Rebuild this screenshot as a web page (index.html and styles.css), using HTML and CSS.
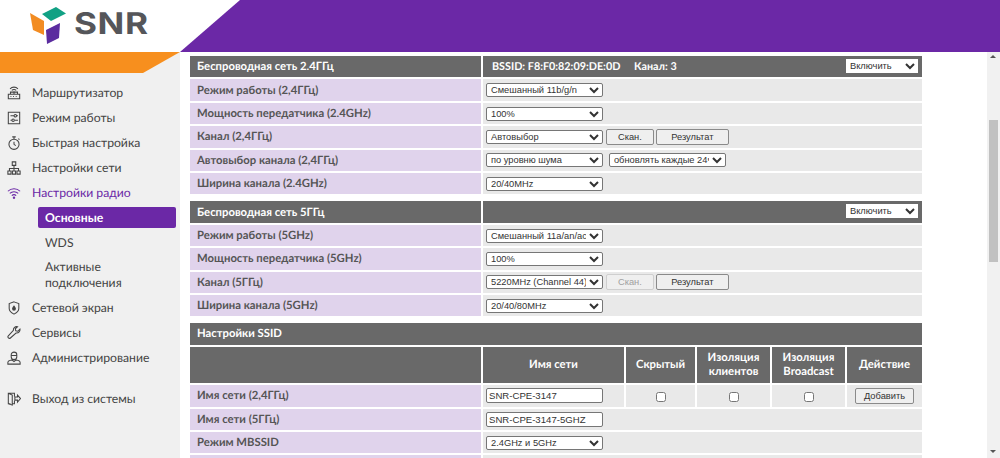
FILE: index.html
```html
<!DOCTYPE html>
<html lang="ru">
<head>
    <meta charset="UTF-8">
    <title>SNR</title>
    <link rel="stylesheet" href="styles.css">
</head>
<body>
    <header class="top">
        <a class="logo">
            <svg class="logo-mark" viewBox="0 0 37 38" width="37" height="38">
                <path d="M12 7 26 0 36 6.500 21 14Z" fill="#12a184"/>
                <path d="M0 6 14 14V28L3 23Z" fill="#f28c22"/>
                <path d="M30 16 29 31 17 37 16 23Z" fill="#5b2c9f"/>
            </svg>
            <span class="logo-text">SNR</span>
        </a>
        <div class="top-fill"></div>
    </header>

    <div class="page">
        <nav class="side">
            <div class="side-bar"></div>
            <ul class="menu">
                <li class="menu-item">
                    <svg class="ico" viewBox="0 0 16 16"><path d="M1.500 9.500h13v5h-13zM4 12h1M7 12h1M10 12h1M8 9.500V6M5.500 5a3.500 3.500 0 0 1 5 0M3.500 3.200a6.300 6.300 0 0 1 9 0M4 9.500V7h8v2.500"/></svg>
                    Маршрутизатор
                </li>
                <li class="menu-item">
                    <svg class="ico" viewBox="0 0 16 16"><path d="M1.500 1.500h13v13h-13zM4 5.500h4M11 5.500h1.500M4 10.500h1.500M9 10.500h3.500"/><circle cx="9.500" cy="5.500" r="1.400"/><circle cx="7" cy="10.500" r="1.400"/></svg>
                    Режим работы
                </li>
                <li class="menu-item">
                    <svg class="ico" viewBox="0 0 16 16"><circle cx="8" cy="9.500" r="5.800"/><path d="M6 1h4M8 1v2.500M8 6.500v3l2 1.500M13 3l1.200 1.200"/></svg>
                    Быстрая настройка
                </li>
                <li class="menu-item">
                    <svg class="ico" viewBox="0 0 16 16"><path d="M6 1h4v4H6zM1 11.500h3.600v3.500H1zM6.200 11.500h3.600v3.500H6.200zM11.400 11.500H15v3.500h-3.600zM8 5v6.500M2.800 11.500V8.500h10.400v3"/></svg>
                    Настройки сети
                </li>
                <li class="menu-item menu-item-active">
                    <svg class="ico" viewBox="0 0 16 16"><path d="M1 6a10 10 0 0 1 14 0M3.200 8.500a7 7 0 0 1 9.600 0M5.500 11a3.700 3.700 0 0 1 5 0"/><circle cx="8" cy="13.300" r="0.800"/></svg>
                    Настройки радио
                </li>
                <li class="sub-item sub-item-current">Основные</li>
                <li class="sub-item">WDS</li>
                <li class="sub-item sub-item-long">Активные подключения</li>
                <li class="menu-item">
                    <svg class="ico" viewBox="0 0 16 16"><path d="M8 1 13.500 3v5.500c0 3-2.500 5-5.500 6.500-3-1.500-5.500-3.500-5.500-6.500V3z"/><path class="ico-solid" d="M8 4.800c1.300 1.700 2.200 2.800 2.200 4a2.200 2.200 0 0 1-4.400 0c0-1.200.9-2.300 2.200-4z"/></svg>
                    Сетевой экран
                </li>
                <li class="menu-item">
                    <svg class="ico" viewBox="0 0 16 16"><path d="M14.800 3.500 12.300 6 10 5.500 9.500 3.200 12 .9C9.500.200 7 2 7.300 5L1.500 11.300c-1.400 1.500.8 3.800 2.400 2.400L10.300 8c3 .4 5-2 4.500-4.500z"/></svg>
                    Сервисы
                </li>
                <li class="menu-item">
                    <svg class="ico" viewBox="0 0 16 16"><path d="M4.800 4.500a3.200 3.200 0 0 1 6.400 0v2a3.200 3.200 0 0 1-6.400 0zM4.800 5.200h6.400M1 15v-2c0-1.500 2.500-2.500 4.500-2.800L8 12l2.500-1.800c2 .3 4.500 1.300 4.500 2.800v2z"/></svg>
                    Администрирование
                </li>
                <li class="menu-item menu-item-exit">
                    <svg class="ico" viewBox="0 0 16 16"><path d="M8.500 5V1.500H1.500v12H4M1.500 1.500 6 3.500v11.500l-4.500-1.500M8.500 10v3.500H6M9 5.700h3V3.500l3.500 4-3.500 4V9.300H9z"/></svg>
                    Выход из системы
                </li>
            </ul>
        </nav>

        <main class="content">
            <table class="conf">
                <colgroup><col class="col-label"><col></colgroup>
                <tr class="head">
                    <td>Беспроводная сеть 2.4ГГц</td>
                    <td class="head-value">
                        <span class="bssid">BSSID: F8:F0:82:09:DE:0D</span>
                        <span>Канал: 3</span>
                        <select class="sel-switch"><option>Включить</option></select>
                    </td>
                </tr>
                <tr>
                    <td>Режим работы (2,4ГГц)</td>
                    <td><select class="sel"><option>Смешанный 11b/g/n</option></select></td>
                </tr>
                <tr>
                    <td>Мощность передатчика (2.4GHz)</td>
                    <td><select class="sel"><option>100%</option></select></td>
                </tr>
                <tr>
                    <td>Канал (2,4ГГц)</td>
                    <td>
                        <select class="sel"><option>Автовыбор</option></select>
                        <button class="btn btn-scan">Скан.</button>
                        <button class="btn btn-result">Результат</button>
                    </td>
                </tr>
                <tr>
                    <td>Автовыбор канала (2,4ГГц)</td>
                    <td>
                        <select class="sel"><option>по уровню шума</option></select>
                        <select class="sel sel-update"><option>обновлять каждые 24ч</option></select>
                    </td>
                </tr>
                <tr>
                    <td>Ширина канала (2.4GHz)</td>
                    <td><select class="sel"><option>20/40MHz</option></select></td>
                </tr>
            </table>

            <table class="conf">
                <colgroup><col class="col-label"><col></colgroup>
                <tr class="head">
                    <td>Беспроводная сеть 5ГГц</td>
                    <td class="head-value"><select class="sel-switch"><option>Включить</option></select></td>
                </tr>
                <tr>
                    <td>Режим работы (5GHz)</td>
                    <td><select class="sel"><option>Смешанный 11a/an/ac</option></select></td>
                </tr>
                <tr>
                    <td>Мощность передатчика (5GHz)</td>
                    <td><select class="sel"><option>100%</option></select></td>
                </tr>
                <tr>
                    <td>Канал (5ГГц)</td>
                    <td>
                        <select class="sel"><option>5220MHz (Channel 44)</option></select>
                        <button class="btn btn-scan" disabled>Скан.</button>
                        <button class="btn btn-result">Результат</button>
                    </td>
                </tr>
                <tr>
                    <td>Ширина канала (5GHz)</td>
                    <td><select class="sel"><option>20/40/80MHz</option></select></td>
                </tr>
            </table>

            <table class="conf">
                <colgroup><col class="col-label"><col class="col-name"><col class="col-hidden"><col class="col-iso"><col class="col-bc"><col></colgroup>
                <tr class="head">
                    <td colspan="6">Настройки SSID</td>
                </tr>
                <tr class="head head-cols">
                    <td></td>
                    <td>Имя сети</td>
                    <td>Скрытый</td>
                    <td>Изоляция клиентов</td>
                    <td>Изоляция Broadcast</td>
                    <td>Действие</td>
                </tr>
                <tr>
                    <td>Имя сети (2,4ГГц)</td>
                    <td><input class="txt" value="SNR-CPE-3147"></td>
                    <td class="cell-center"><input type="checkbox"></td>
                    <td class="cell-center"><input type="checkbox"></td>
                    <td class="cell-center"><input type="checkbox"></td>
                    <td class="cell-center"><button class="btn btn-add">Добавить</button></td>
                </tr>
                <tr>
                    <td>Имя сети (5ГГц)</td>
                    <td colspan="5"><input class="txt" value="SNR-CPE-3147-5GHZ"></td>
                </tr>
                <tr>
                    <td>Режим MBSSID</td>
                    <td colspan="5"><select class="sel"><option>2.4GHz и 5GHz</option></select></td>
                </tr>
                <tr>
                    <td></td>
                    <td colspan="5"></td>
                </tr>
            </table>
        </main>

        <div class="scroll">
            <span class="scroll-up"></span>
            <div class="scroll-thumb"></div>
            <span class="scroll-down"></span>
        </div>
    </div>
</body>
</html>
```

FILE: styles.css
```css
html, body {
    height: 100%;
}
body {
    margin: 0;
    overflow: hidden;
    background: #fff;
    font-family: "Lato", "Open Sans", sans-serif;
    color: #444;
    text-rendering: geometricPrecision;
}
.top {
    height: 52px;
    display: flex;
}
.logo {
    width: 180px;
    flex: none;
    display: flex;
    align-items: flex-start;
    padding: 7px 0 0 30px;
    box-sizing: border-box;
}
.logo-text {
    font-family: "Inter", "Liberation Sans", sans-serif;
    font-size: 30px;
    line-height: 34px;
    font-weight: 700;
    letter-spacing: 0.500px;
    color: #55565a;
    margin-left: 7px;
    transform: scaleX(1.170);
    transform-origin: left center;
}
.top-fill {
    flex: 1;
    background: #6b28a6;
    clip-path: polygon(0 100%, 60px 0, 100% 0, 100% 100%);
}
.page {
    display: flex;
    height: 406px;
}
.side {
    width: 180px;
    flex: none;
    background: #f0f0f0;
}
.side-bar {
    height: 21px;
    background: #f78f1e;
    clip-path: polygon(0 0, 100% 0, 143px 100%, 0 100%);
}
.menu {
    list-style: none;
    margin: 0;
    padding: 7px 0 0;
    font-size: 12.200px;
}
.menu-item {
    display: flex;
    align-items: center;
    gap: 11px;
    height: 25px;
    padding-left: 7px;
    color: #444;
}
.menu-item-active {
    color: #6b28a6;
}
.menu-item-exit {
    margin-top: 16px;
}
.ico {
    width: 14px;
    height: 16px;
    flex: none;
    fill: none;
    stroke: currentColor;
    stroke-width: 1.200;
}
.ico-solid {
    fill: currentColor;
    stroke: none;
}
.sub-item {
    height: 25px;
    line-height: 25px;
    padding-left: 45px;
    color: #444;
}
.sub-item-current {
    margin: 2px 4px 2px 38px;
    height: 21px;
    line-height: 21px;
    padding-left: 7px;
    background: #6b28a6;
    border-radius: 2px;
    color: #fff;
    font-weight: 700;
}
.sub-item-long {
    height: auto;
    line-height: 16px;
    padding: 4px 40px 4px 45px;
}
.content {
    width: 732px;
    flex: none;
    margin-left: 10px;
    padding-top: 2px;
}
.conf {
    width: 732px;
    table-layout: fixed;
    border-collapse: collapse;
    margin-bottom: 3px;
    font-size: 11.300px;
}
.conf td {
    height: 21.400px;
    padding: 0 0 0 3px;
    box-sizing: content-box;
    background: #e9e9e9;
    border: 2px solid #fff;
    white-space: nowrap;
}
.conf tr > td:first-child {
    background: #e0d3ec;
    font-weight: 700;
    color: #555;
    border-left: 0;
    padding-left: 7px;
}
.conf tr > td:last-child {
    border-right: 0;
}
.conf tr.head > td,
.conf tr.head > td:first-child {
    background: #696969;
    color: #fff;
    font-weight: 700;
}
.conf tr.head > .head-value {
    position: relative;
    padding-left: 9px;
    font-size: 10.800px;
}
.bssid {
    margin-right: 11px;
}
.col-label {
    width: 292px;
}
.col-name {
    width: 143px;
}
.col-hidden {
    width: 71px;
}
.col-iso {
    width: 75px;
}
.col-bc {
    width: 75px;
}
.conf tr.head-cols > td {
    height: 36.500px;
    text-align: center;
    white-space: normal;
    line-height: 14px;
    padding: 0 6px;
}
.sel, .sel-switch, .txt, .btn {
    font-family: "Liberation Sans", Arial, sans-serif;
    font-size: 9.300px;
    color: #333;
    box-sizing: border-box;
    vertical-align: middle;
}
.sel {
    width: 117px;
    height: 14px;
    border: 1px solid #767676;
    border-radius: 2px;
    background-color: #fff;
    padding: 0;
}
.sel-update {
    margin-left: 3px;
}
.sel-switch {
    position: absolute;
    right: 4px;
    top: 3px;
    width: 72px;
    height: 14px;
    border: 0;
    background: #fff;
    padding: 0;
}
.txt {
    width: 117px;
    height: 15px;
    border: 1px solid #767676;
    border-radius: 2px;
    padding: 0 2px;
    font-size: 9.600px;
}
.btn {
    height: 16px;
    border: 1px solid #8a8a8a;
    border-radius: 2px;
    background: #efefef;
    padding: 0;
}
.btn:disabled {
    color: #a0a0a0;
    border-color: #cfcfcf;
}
.btn-scan {
    width: 48px;
}
.btn-result {
    width: 73px;
    margin-left: -1px;
}
.btn-add {
    width: 59px;
}
.cell-center {
    text-align: center;
}
.conf tr > .cell-center {
    padding-left: 0;
}
.cell-center input {
    margin: 0;
    width: 10px;
    height: 10px;
    vertical-align: middle;
}
.scroll {
    position: absolute;
    right: 0;
    top: 52px;
    bottom: 0;
    width: 13px;
    background: #f1f1f1;
}
.scroll-up, .scroll-down {
    position: absolute;
    left: 3px;
    width: 0;
    height: 0;
    border-left: 3px solid transparent;
    border-right: 3px solid transparent;
}
.scroll-up {
    top: 3px;
    border-bottom: 3px solid #555;
}
.scroll-down {
    bottom: 5px;
    border-top: 3px solid #555;
}
.scroll-thumb {
    position: absolute;
    left: 2px;
    right: 2px;
    top: 68px;
    height: 142px;
    background: #c1c1c1;
}
```
